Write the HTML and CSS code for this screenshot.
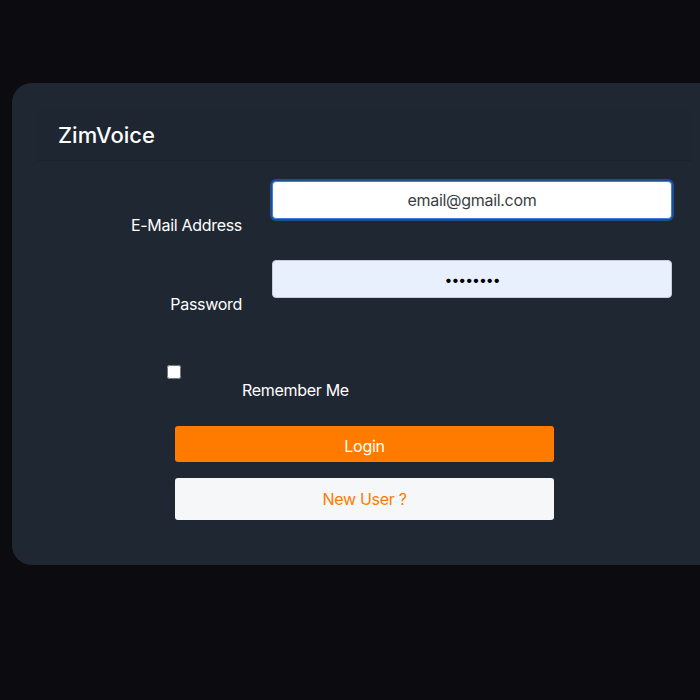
FILE: index.html
```html
<!DOCTYPE html>
<html>
<head>
<meta charset="utf-8">
<link rel="stylesheet" href="styles.css">
</head>
<body>
<div class="card">
  <div class="card-header">ZimVoice</div>
  <form class="form">
    <div class="row">
      <label class="label">E-Mail Address</label>
      <input class="input focus" type="email" value="email@gmail.com">
    </div>
    <div class="row row-pass">
      <label class="label">Password</label>
      <input class="input autofill" type="password" value="password">
    </div>
    <div class="remember">
      <input class="check" type="checkbox">
      <span class="remember-text">Remember Me</span>
    </div>
    <div class="actions">
      <button type="button" class="btn btn-login">Login</button>
      <button type="button" class="btn btn-new">New User ?</button>
    </div>
  </form>
</div>
</body>
</html>
```
FILE: styles.css
```css
html, body {
  margin: 0;
  padding: 0;
  background: #0c0c10;
  font-family: Inter, "Liberation Sans", sans-serif;
  color: #ffffff;
  overflow: hidden;
}
.card {
  margin: 83px 0 0 12px;
  width: 720px;
  height: 482px;
  box-sizing: border-box;
  background: #1f2733;
  border-radius: 20px;
  padding: 27px 0 0 25px;
}
.card-header {
  width: 655px;
  height: 51px;
  box-sizing: border-box;
  border-bottom: 1px solid #1c232d;
  background: #1e2631;
  padding: 12px 0 0 21px;
  font-size: 22px;
  font-weight: 500;
  line-height: 26px;
}
.form {
  display: flex;
  flex-direction: column;
}
.row {
  display: grid;
  grid-template-columns: 205px 400px;
  column-gap: 30px;
  margin-top: 20px;
  align-items: start;
}
.row-pass {
  margin-top: 25px;
}
.label {
  text-align: right;
  font-size: 16px;
  line-height: 20px;
  padding-top: 34px;
  letter-spacing: -0.3px;
}
.input {
  height: 38px;
  box-sizing: border-box;
  border-radius: 4px;
  border: 1px solid #c9ced6;
  text-align: center;
  font-family: Inter, "Liberation Sans", sans-serif;
  font-size: 16px;
  letter-spacing: -0.3px;
  color: #3a3f45;
  padding: 0 10px;
  margin: 0;
}
.focus {
  background: #ffffff;
  border: 1px solid #3d7fd6;
  box-shadow: 0 0 0 2px #1d4e8f;
}
.autofill {
  background: #e8f0fe;
  color: #000000;
  font-size: 14px;
  letter-spacing: -1px;
}
.remember {
  display: flex;
  align-items: flex-start;
  margin-top: 51px;
  padding-left: 130px;
}
.check {
  width: 14px;
  height: 14px;
  margin: 0;
  border-radius: 3px;
}
.remember-text {
  margin-left: 61px;
  margin-top: 15px;
  font-size: 16px;
  line-height: 20px;
  letter-spacing: -0.3px;
}
.actions {
  display: flex;
  flex-direction: column;
  gap: 16px;
  margin-top: 26px;
  padding-left: 138px;
}
.btn {
  width: 379px;
  border: none;
  border-radius: 3px;
  font-family: Inter, "Liberation Sans", sans-serif;
  font-size: 16px;
  letter-spacing: -0.3px;
  margin: 0;
}
.btn-login {
  height: 36px;
  padding-top: 5px;
  background: #ff7b00;
  color: #ffffff;
}
.btn-new {
  height: 42px;
  background: #f6f7f9;
  color: #ff7b00;
}
```
